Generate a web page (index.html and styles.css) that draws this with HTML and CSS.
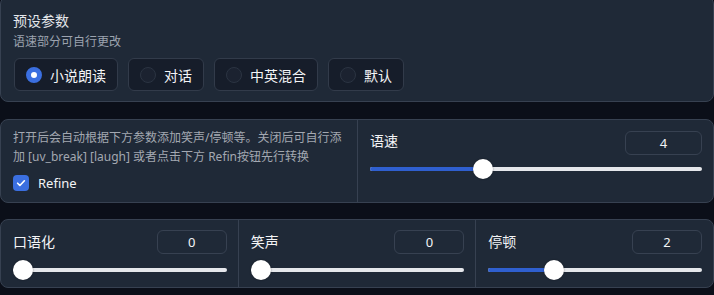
FILE: index.html
```html
<!DOCTYPE html>
<html lang="zh">
<head>
<meta charset="utf-8">
<link rel="stylesheet" href="styles.css">
</head>
<body>
<div class="page">
  <section class="panel preset">
    <div class="title">预设参数</div>
    <div class="subtitle">语速部分可自行更改</div>
    <div class="radios">
      <label class="radio checked"><span class="dot"></span><span>小说朗读</span></label>
      <label class="radio"><span class="dot"></span><span>对话</span></label>
      <label class="radio"><span class="dot"></span><span>中英混合</span></label>
      <label class="radio"><span class="dot"></span><span>默认</span></label>
    </div>
  </section>

  <section class="panel row refine">
    <div class="col info">
      <p class="desc">打开后会自动根据下方参数添加笑声/停顿等。关闭后可自行添加 [uv_break] [laugh] 或者点击下方 Refin按钮先行转换</p>
      <label class="check"><span class="box"><svg viewBox="0 0 16 16" width="12" height="12"><path d="M3.5 8.3l3 3 6-6.3" fill="none" stroke="#fff" stroke-width="2.2" stroke-linecap="round" stroke-linejoin="round"/></svg></span><span>Refine</span></label>
    </div>
    <div class="col slider-col">
      <div class="head"><span class="label">语速</span><span class="num wide">4</span></div>
      <div class="slider"><div class="track"></div><div class="fill" style="width:calc(0.33 * (100% - 20px) + 10px)"></div><div class="thumb" style="left:calc(0.33 * (100% - 20px))"></div></div>
    </div>
  </section>

  <section class="panel row three">
    <div class="col slider-col">
      <div class="head"><span class="label">口语化</span><span class="num">0</span></div>
      <div class="slider"><div class="track"></div><div class="thumb" style="left:0"></div></div>
    </div>
    <div class="col slider-col">
      <div class="head"><span class="label">笑声</span><span class="num">0</span></div>
      <div class="slider"><div class="track"></div><div class="thumb" style="left:0"></div></div>
    </div>
    <div class="col slider-col">
      <div class="head"><span class="label">停顿</span><span class="num">2</span></div>
      <div class="slider"><div class="track"></div><div class="fill" style="width:calc(0.285 * (100% - 20px) + 10px)"></div><div class="thumb" style="left:calc(0.285 * (100% - 20px))"></div></div>
    </div>
  </section>
</div>
</body>
</html>
```

FILE: styles.css
```css
html, body {
  margin: 0;
  padding: 0;
  background: #0b0f19;
  height: 100%;
  overflow: hidden;
}
body {
  font-family: "Noto Sans", "Noto Sans CJK SC", sans-serif;
  color: #e5e7eb;
}
.page {
  width: 714px;
  display: flex;
  flex-direction: column;
  gap: 16px;
}
.panel {
  background: #1f2937;
  border: 1px solid #374151;
  border-radius: 8px;
  box-sizing: border-box;
  width: 714px;
}
.preset {
  margin-top: -4px;
  padding: 14px 12px 10px 12px;
}
.title {
  font-size: 14px;
  line-height: 20px;
  color: #e5e7eb;
}
.subtitle {
  font-size: 12px;
  line-height: 18px;
  color: #9ca3af;
  margin-top: 2px;
}
.radios {
  display: flex;
  gap: 10px;
  margin-top: 7px;
  margin-left: 1px;
}
.radio {
  display: flex;
  align-items: center;
  gap: 8px;
  height: 33px;
  box-sizing: border-box;
  padding: 0 11px 0 11px;
  border: 1px solid #323b4a;
  border-radius: 6px;
  background: #161d2a;
  font-size: 14px;
  color: #f3f4f6;
}
.dot {
  width: 16px;
  height: 16px;
  border-radius: 50%;
  box-sizing: border-box;
  border: 1px solid #2b3442;
  background: #1b2230;
}
.radio.checked .dot {
  border: 5px solid #3b6fe0;
  background: #ffffff;
}
.row {
  display: flex;
}
.refine {
  margin-top: 1px;
}
.col {
  box-sizing: border-box;
}
.info {
  width: 357px;
  border-right: 1px solid #374151;
  padding: 8px 12px 10px 12px;
}
.desc {
  margin: 0;
  font-size: 12px;
  line-height: 19px;
  color: #a3a8b1;
}
.check {
  display: flex;
  align-items: center;
  gap: 9px;
  margin-top: 8px;
  font-size: 13px;
  color: #f3f4f6;
}
.box {
  width: 16px;
  height: 16px;
  border-radius: 4px;
  background: #3b6fe0;
  display: flex;
  align-items: center;
  justify-content: center;
}
.slider-col {
  flex: 1;
  padding: 11px 11px 12px 12px;
}
.three .slider-col {
  padding: 10px 11px 7px 12px;
}
.three .slider-col + .slider-col {
  border-left: 1px solid #374151;
}
.head {
  display: flex;
  justify-content: space-between;
  align-items: center;
}
.refine .head {
  align-items: flex-start;
}
.label {
  font-size: 14px;
  line-height: 20px;
  color: #f3f4f6;
}
.num {
  width: 70px;
  height: 24px;
  box-sizing: border-box;
  border: 1px solid #374151;
  border-radius: 6px;
  font-size: 13px;
  line-height: 22px;
  text-align: center;
  color: #f3f4f6;
}
.num.wide {
  width: 77px;
}
.slider {
  position: relative;
  height: 20px;
  margin-top: 4px;
}
.three .slider {
  margin-top: 6px;
}
.track {
  position: absolute;
  left: 0;
  right: 0;
  top: 8px;
  height: 4px;
  border-radius: 2px;
  background: #e5e7eb;
}
.fill {
  position: absolute;
  left: 0;
  top: 8px;
  height: 4px;
  border-radius: 2px;
  background: #2f5fcf;
}
.thumb {
  position: absolute;
  top: 0;
  width: 20px;
  height: 20px;
  border-radius: 50%;
  background: #ffffff;
  box-shadow: 0 0 2px rgba(0,0,0,0.4);
}
```
